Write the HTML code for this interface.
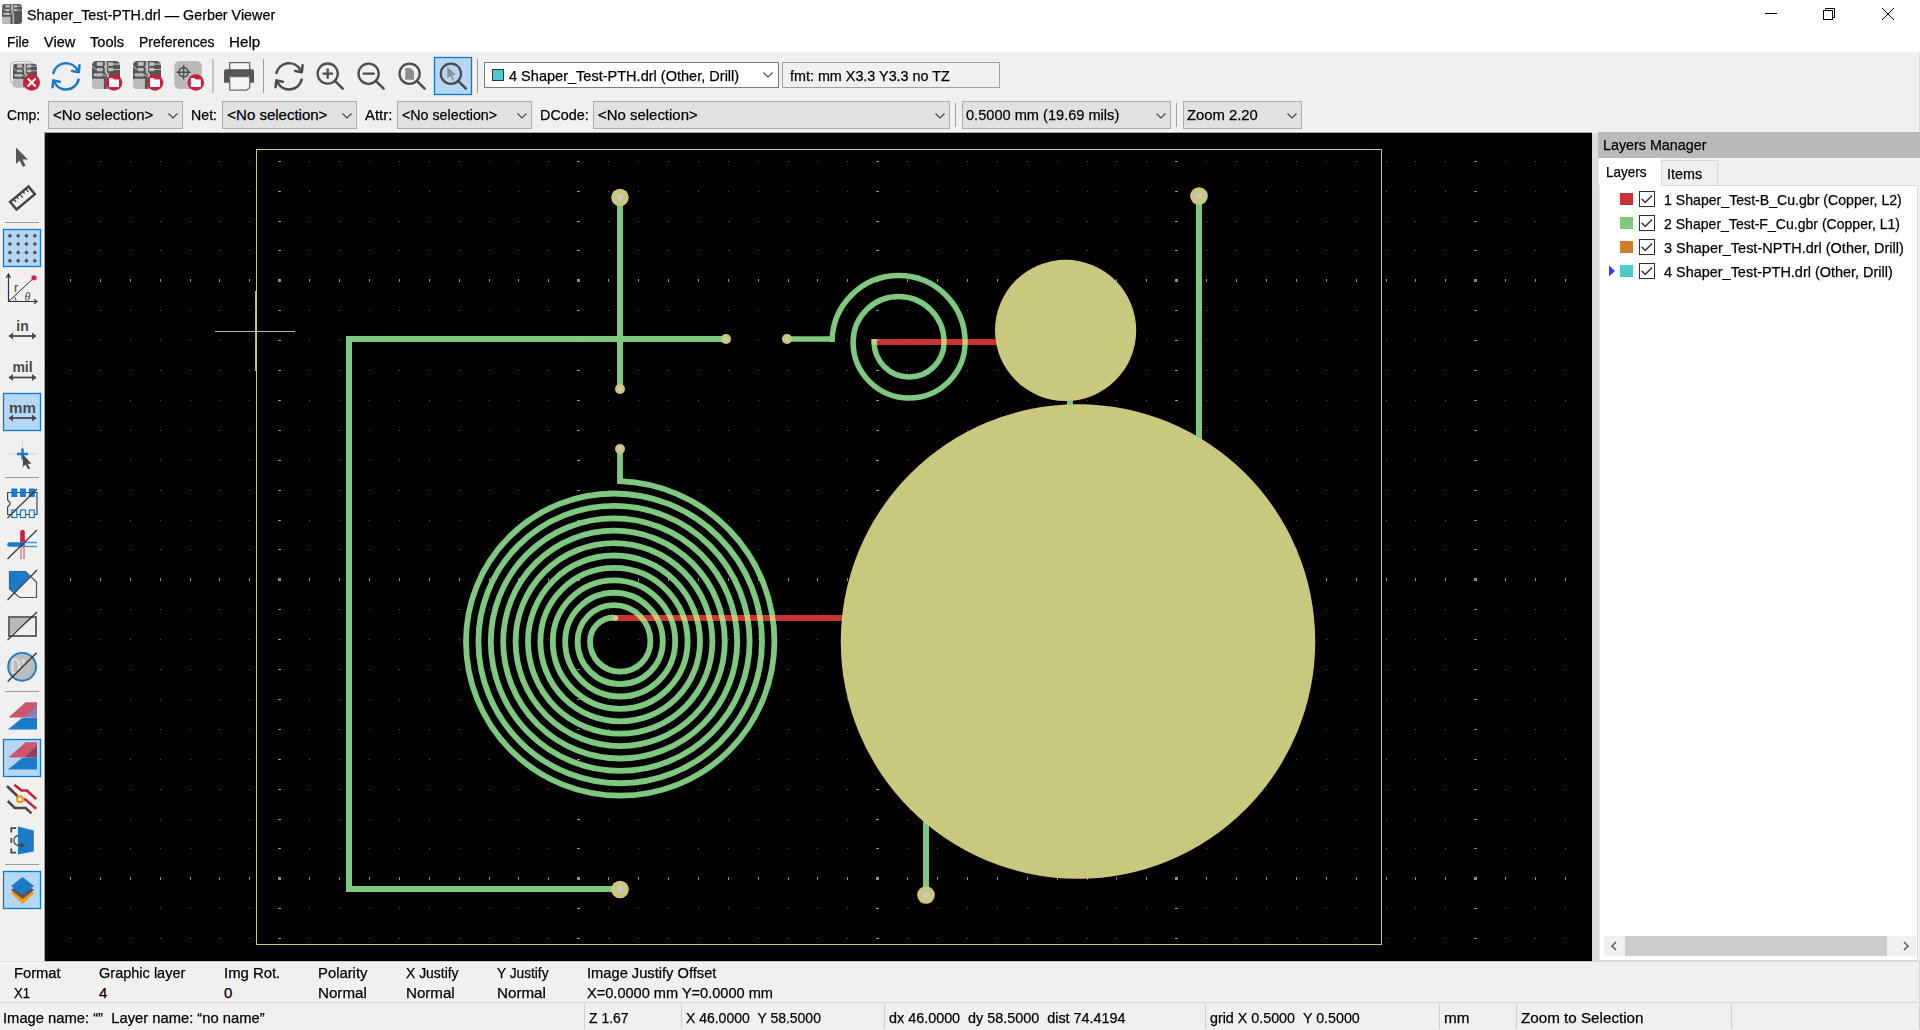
<!DOCTYPE html>
<html><head><meta charset="utf-8"><title>Gerber Viewer</title>
<style>
html,body{margin:0;padding:0;width:1920px;height:1030px;overflow:hidden;background:#f0f0f0;font-family:"Liberation Sans", sans-serif;}
.t{position:absolute;white-space:nowrap;line-height:1;font-family:"Liberation Sans", sans-serif;-webkit-text-stroke:0.25px currentColor;}
.r{position:absolute;}
</style></head><body>
<svg width="0" height="0" style="position:absolute"><symbol id="pcb" viewBox="0 0 28 28">
<rect width="28" height="28" rx="4.5" fill="#555"/>
<path d="M0 17.8H11.9V28H4.5Q0 28 0 23.5Z" fill="#bcbcbc"/>
<path d="M13.9 0V11.2L15.9 13.6V28" stroke="#b9b9b9" stroke-width="2.2" fill="none"/>
<circle cx="13.9" cy="5.8" r="1.9" fill="#b9b9b9"/>
<rect x="4.8" y="1" width="6" height="3.9" rx="0.8" fill="#bdbdbd"/>
<rect x="4.8" y="6.9" width="6" height="3.3" rx="0.8" fill="#bdbdbd"/>
<rect x="4.8" y="12.2" width="6" height="3.3" rx="0.8" fill="#bdbdbd"/>
<rect x="16.1" y="1.3" width="5.2" height="3.6" rx="0.8" fill="#bdbdbd"/>
<rect x="16.1" y="6.9" width="5.2" height="3.3" rx="0.8" fill="#bdbdbd"/>
<path d="M21 3.1H28M21 8.5H28M0 4.6Q2.5 8.5 4.8 8.5M10.8 13.8Q12.3 13.8 14 15.4" stroke="#b9b9b9" stroke-width="1.1" fill="none"/>
<path d="M0.9 13.8L2.8 12.2H4.8V15.5H2.8Z" fill="#bdbdbd"/>
</symbol></svg>
<div class="r" style="left:0px;top:0px;width:1920px;height:52px;background:#fff;"></div>
<svg class="r" style="left:2px;top:4px" width="20" height="20" viewBox="0 0 20 20"><use href="#pcb" width="20" height="20"/></svg>
<div class="t" style="left:27.30px;top:7.30px;font-size:15px;color:#000;transform:scaleX(0.9551);transform-origin:0 0;">Shaper_Test-PTH.drl — Gerber Viewer</div>
<svg class="r" style="left:1755px;top:0px" width="165" height="30" viewBox="1755 0 165 30"><path d="M1765 13.5H1777" stroke="#000" stroke-width="1"/><rect x="1823.5" y="10.5" width="9" height="9" fill="none" stroke="#000" stroke-width="1"/><path d="M1825.5 10.5V8.5H1834.5V17.5H1832.5" fill="none" stroke="#000" stroke-width="1"/><path d="M1882 8L1894 20M1894 8L1882 20" stroke="#000" stroke-width="1"/></svg>
<div class="t" style="left:7.30px;top:34.30px;font-size:15px;color:#000;transform:scaleX(0.9161);transform-origin:0 0;">File</div>
<div class="t" style="left:44.30px;top:34.30px;font-size:15px;color:#000;transform:scaleX(0.9674);transform-origin:0 0;">View</div>
<div class="t" style="left:90.40px;top:34.30px;font-size:15px;color:#000;transform:scaleX(0.9743);transform-origin:0 0;">Tools</div>
<div class="t" style="left:139.30px;top:34.30px;font-size:15px;color:#000;transform:scaleX(0.9335);transform-origin:0 0;">Preferences</div>
<div class="t" style="left:229.20px;top:34.30px;font-size:15px;color:#000;transform:scaleX(1.0105);transform-origin:0 0;">Help</div>
<div class="r" style="left:0px;top:52px;width:1920px;height:81px;background:#f0f0f0;"></div>
<svg class="r" style="left:0;top:52px" width="500" height="48" viewBox="0 52 500 48">
<rect x="10.5" y="61.5" width="23" height="23" rx="5" fill="none" stroke="#bdbdbd" stroke-width="1.2"/>
<use href="#pcb" x="13" y="63.5" width="24" height="24"/>
<circle cx="31.7" cy="82.5" r="8.3" fill="#c8213b"/><path d="M27.7 78.5L35.7 86.5M35.7 78.5L27.7 86.5" stroke="#fff" stroke-width="2.2"/>
<path d="M53.4 72.9A13 13 0 0 1 77.3 69.8" stroke="#1a7bc9" stroke-width="2.6" fill="none" stroke-linecap="round"/><path d="M78.6 79.7A13 13 0 0 1 54.7 82.8" stroke="#1a7bc9" stroke-width="2.6" fill="none" stroke-linecap="round"/><path d="M79.5 65.4L78.7 72.2L72.2 70.9" stroke="#1a7bc9" stroke-width="2.6" fill="none" stroke-linecap="round" stroke-linejoin="round"/><path d="M52.5 87.2L53.3 80.4L59.8 81.7" stroke="#1a7bc9" stroke-width="2.6" fill="none" stroke-linecap="round" stroke-linejoin="round"/>
<use href="#pcb" x="92" y="61" width="28" height="28"/>
<circle cx="114" cy="82.5" r="8.3" fill="#c8213b"/><path d="M109 78.0H112.5L114 79.5H119V87.0H109Z" fill="#fff"/>
<use href="#pcb" x="133" y="61" width="28" height="28"/>
<circle cx="155" cy="82.5" r="8.3" fill="#c8213b"/><path d="M150 78.0H153.5L155 79.5H160V87.0H150Z" fill="#fff"/>
<rect x="174.3" y="61" width="27.5" height="28" rx="5" fill="#bababa"/>
<circle cx="183.6" cy="72.2" r="4.6" stroke="#4d4d4d" stroke-width="1.6" fill="none"/>
<path d="M176.5 72.2H190.7M183.6 65V79.5" stroke="#4d4d4d" stroke-width="1.4"/>
<circle cx="195.8" cy="82.5" r="8.3" fill="#c8213b"/><path d="M190.8 78.0H194.3L195.8 79.5H200.8V87.0H190.8Z" fill="#fff"/>
<rect x="212.5" y="59" width="1" height="34" fill="#9a9a9a"/>
<rect x="229.7" y="62.6" width="20" height="8" fill="#f4f4f4" stroke="#6a6a6a" stroke-width="1.3"/>
<path d="M226 69.2H252Q254 69.2 254 71.2V82.8H224V71.2Q224 69.2 226 69.2Z" fill="#555"/>
<path d="M229.7 76.5H249.7V87.5L246.7 90.2H229.7Z" fill="#f4f4f4" stroke="#6a6a6a" stroke-width="1.3"/>
<rect x="263" y="59" width="1" height="34" fill="#9a9a9a"/>
<path d="M276.5 72.9A13 13 0 0 1 300.4 69.8" stroke="#4d4d4d" stroke-width="2.6" fill="none" stroke-linecap="round"/><path d="M301.7 79.7A13 13 0 0 1 277.8 82.8" stroke="#4d4d4d" stroke-width="2.6" fill="none" stroke-linecap="round"/><path d="M302.6 65.4L301.8 72.2L295.3 70.9" stroke="#4d4d4d" stroke-width="2.6" fill="none" stroke-linecap="round" stroke-linejoin="round"/><path d="M275.6 87.2L276.4 80.4L282.9 81.7" stroke="#4d4d4d" stroke-width="2.6" fill="none" stroke-linecap="round" stroke-linejoin="round"/>
<circle cx="327.7" cy="73.6" r="10.1" stroke="#4d4d4d" stroke-width="2.3" fill="none"/><path d="M334.9 80.8L342.7 88.6" stroke="#4d4d4d" stroke-width="2.6" stroke-linecap="round"/><path d="M322.5 73.6H333M327.7 68.4V78.8" stroke="#4d4d4d" stroke-width="2.3"/>
<circle cx="368.6" cy="73.7" r="10.1" stroke="#4d4d4d" stroke-width="2.3" fill="none"/><path d="M375.8 80.9L383.6 88.7" stroke="#4d4d4d" stroke-width="2.6" stroke-linecap="round"/><path d="M363.5 73.7H373.8" stroke="#4d4d4d" stroke-width="2.3" stroke-linecap="round"/>
<circle cx="409.6" cy="73.7" r="10.1" stroke="#4d4d4d" stroke-width="2.3" fill="none"/><path d="M416.8 80.9L424.6 88.7" stroke="#4d4d4d" stroke-width="2.6" stroke-linecap="round"/><path d="M405.3 68H410.5L414 71.3V79.8H405.3Z" fill="#8c8c8c"/>
<rect x="434.5" y="57.5" width="37" height="37" fill="#b6d7f3" stroke="#0a78d6" stroke-width="1.3"/>
<circle cx="450.9" cy="73.7" r="10.1" stroke="#4d4d4d" stroke-width="2.3" fill="none"/><path d="M458.09999999999997 80.9L465.9 88.7" stroke="#4d4d4d" stroke-width="2.6" stroke-linecap="round"/><path d="M447.3 67L456 74.7L452.3 75L454 80L452.6 80.6L450.7 75.7L447.3 78.3Z" fill="#8e8e8e"/>
<rect x="477" y="59" width="1" height="34" fill="#9a9a9a"/>
</svg>
<div class="r" style="left:484px;top:62px;width:295px;height:26px;background:#fff;box-sizing:border-box;border:1px solid #7a7a7a;"></div>
<div class="r" style="left:492px;top:69px;width:12px;height:12px;background:#4fcbcb;box-sizing:border-box;border:1px solid #333;"></div>
<div class="t" style="left:509.00px;top:68.30px;font-size:15px;color:#000;transform:scaleX(0.9688);transform-origin:0 0;">4 Shaper_Test-PTH.drl (Other, Drill)</div>
<svg class="r" style="left:763px;top:72px" width="10" height="6" viewBox="0 0 10 6"><path d="M0.5 0.5L5 5L9.5 0.5" stroke="#444" stroke-width="1.1" fill="none"/></svg>
<div class="r" style="left:782px;top:62px;width:218px;height:26px;background:#f0f0f0;box-sizing:border-box;border:1px solid #a0a0a0;"></div>
<div class="t" style="left:789.60px;top:68.30px;font-size:15px;color:#000;transform:scaleX(0.9569);transform-origin:0 0;">fmt: mm X3.3 Y3.3 no TZ</div>
<div class="t" style="left:6.50px;top:107.30px;font-size:15px;color:#000;transform:scaleX(0.9226);transform-origin:0 0;">Cmp:</div>
<div class="r" style="left:48px;top:101px;width:135px;height:28px;background:#e1e1e1;box-sizing:border-box;border:1px solid #adadad;"></div><div class="t" style="left:53.40px;top:107.30px;font-size:15px;color:#000;transform:scaleX(1.0020);transform-origin:0 0;">&lt;No selection&gt;</div><svg class="r" style="left:168px;top:112.5px" width="10" height="6" viewBox="0 0 10 6"><path d="M0.5 0.5L5 5L9.5 0.5" stroke="#444" stroke-width="1.1" fill="none"/></svg>
<div class="t" style="left:191.40px;top:107.30px;font-size:15px;color:#000;transform:scaleX(0.9455);transform-origin:0 0;">Net:</div>
<div class="r" style="left:222px;top:101px;width:135px;height:28px;background:#e1e1e1;box-sizing:border-box;border:1px solid #adadad;"></div><div class="t" style="left:227.30px;top:107.30px;font-size:15px;color:#000;transform:scaleX(1.0000);transform-origin:0 0;">&lt;No selection&gt;</div><svg class="r" style="left:342px;top:112.5px" width="10" height="6" viewBox="0 0 10 6"><path d="M0.5 0.5L5 5L9.5 0.5" stroke="#444" stroke-width="1.1" fill="none"/></svg>
<div class="t" style="left:365.40px;top:107.30px;font-size:15px;color:#000;transform:scaleX(0.9927);transform-origin:0 0;">Attr:</div>
<div class="r" style="left:397px;top:101px;width:135px;height:28px;background:#e1e1e1;box-sizing:border-box;border:1px solid #adadad;"></div><div class="t" style="left:402.40px;top:107.30px;font-size:15px;color:#000;transform:scaleX(0.9500);transform-origin:0 0;">&lt;No selection&gt;</div><svg class="r" style="left:517px;top:112.5px" width="10" height="6" viewBox="0 0 10 6"><path d="M0.5 0.5L5 5L9.5 0.5" stroke="#444" stroke-width="1.1" fill="none"/></svg>
<div class="t" style="left:540.10px;top:107.30px;font-size:15px;color:#000;transform:scaleX(0.9592);transform-origin:0 0;">DCode:</div>
<div class="r" style="left:593px;top:101px;width:357px;height:28px;background:#e1e1e1;box-sizing:border-box;border:1px solid #adadad;"></div><div class="t" style="left:598.40px;top:107.30px;font-size:15px;color:#000;transform:scaleX(0.9960);transform-origin:0 0;">&lt;No selection&gt;</div><svg class="r" style="left:935px;top:112.5px" width="10" height="6" viewBox="0 0 10 6"><path d="M0.5 0.5L5 5L9.5 0.5" stroke="#444" stroke-width="1.1" fill="none"/></svg>
<div class="r" style="left:955px;top:103px;width:1px;height:24px;background:#a0a0a0;"></div>
<div class="r" style="left:962px;top:101px;width:209px;height:28px;background:#e1e1e1;box-sizing:border-box;border:1px solid #adadad;"></div><div class="t" style="left:965.50px;top:107.30px;font-size:15px;color:#000;transform:scaleX(0.9727);transform-origin:0 0;">0.5000 mm (19.69 mils)</div><svg class="r" style="left:1156px;top:112.5px" width="10" height="6" viewBox="0 0 10 6"><path d="M0.5 0.5L5 5L9.5 0.5" stroke="#444" stroke-width="1.1" fill="none"/></svg>
<div class="r" style="left:1176px;top:103px;width:1px;height:24px;background:#a0a0a0;"></div>
<div class="r" style="left:1183px;top:101px;width:119px;height:28px;background:#e1e1e1;box-sizing:border-box;border:1px solid #adadad;"></div><div class="t" style="left:1187.10px;top:107.30px;font-size:15px;color:#000;transform:scaleX(0.9882);transform-origin:0 0;">Zoom 2.20</div><svg class="r" style="left:1287px;top:112.5px" width="10" height="6" viewBox="0 0 10 6"><path d="M0.5 0.5L5 5L9.5 0.5" stroke="#444" stroke-width="1.1" fill="none"/></svg>
<div class="r" style="left:0px;top:133px;width:44px;height:828px;background:#f0f0f0;"></div>
<svg class="r" style="left:0;top:133px" width="44" height="828" viewBox="0 133 44 828">
<path d="M16 147.5V164L19.6 160.6L23 167L25.6 165.6L22.5 159.5H28Z" fill="#555"/>
<g transform="rotate(-40 22.5 198)"><rect x="10.5" y="193" width="24" height="10" fill="none" stroke="#444" stroke-width="2.4"/><path d="M15 193V197M19 193V196M23 193V198M27 193V196M31 193V197" stroke="#444" stroke-width="1.3"/></g>
<rect x="5" y="222" width="34" height="1" fill="#9a9a9a"/>
<rect x="3.5" y="229.5" width="37" height="37" fill="#b6d7f3" stroke="#0a78d6" stroke-width="1.3"/>
<rect x="8.3" y="234.2" width="3.2" height="3.2" transform="rotate(45 9.9 235.8)" fill="#555"/><rect x="8.3" y="242.5" width="3.2" height="3.2" transform="rotate(45 9.9 244.1)" fill="#555"/><rect x="8.3" y="250.8" width="3.2" height="3.2" transform="rotate(45 9.9 252.4)" fill="#555"/><rect x="8.3" y="259.1" width="3.2" height="3.2" transform="rotate(45 9.9 260.7)" fill="#555"/><rect x="16.6" y="234.2" width="3.2" height="3.2" transform="rotate(45 18.2 235.8)" fill="#555"/><rect x="16.6" y="242.5" width="3.2" height="3.2" transform="rotate(45 18.2 244.1)" fill="#555"/><rect x="16.6" y="250.8" width="3.2" height="3.2" transform="rotate(45 18.2 252.4)" fill="#555"/><rect x="16.6" y="259.1" width="3.2" height="3.2" transform="rotate(45 18.2 260.7)" fill="#555"/><rect x="24.9" y="234.2" width="3.2" height="3.2" transform="rotate(45 26.5 235.8)" fill="#555"/><rect x="24.9" y="242.5" width="3.2" height="3.2" transform="rotate(45 26.5 244.1)" fill="#555"/><rect x="24.9" y="250.8" width="3.2" height="3.2" transform="rotate(45 26.5 252.4)" fill="#555"/><rect x="24.9" y="259.1" width="3.2" height="3.2" transform="rotate(45 26.5 260.7)" fill="#555"/><rect x="33.2" y="234.2" width="3.2" height="3.2" transform="rotate(45 34.8 235.8)" fill="#555"/><rect x="33.2" y="242.5" width="3.2" height="3.2" transform="rotate(45 34.8 244.1)" fill="#555"/><rect x="33.2" y="250.8" width="3.2" height="3.2" transform="rotate(45 34.8 252.4)" fill="#555"/><rect x="33.2" y="259.1" width="3.2" height="3.2" transform="rotate(45 34.8 260.7)" fill="#555"/>
<path d="M8.5 275V301.5H36" stroke="#333" stroke-width="1.2" fill="none"/>
<path d="M6.3 278L8.5 274L10.7 278M34 299.3L37 301.5L34 303.7" stroke="#333" stroke-width="1.1" fill="none"/>
<path d="M8.5 301.5L33.8 278" stroke="#333" stroke-width="1"/>
<path d="M16 301.5A8 8 0 0 0 14.5 296.5" stroke="#333" stroke-width="0.9" fill="none"/>
<circle cx="34" cy="277.8" r="2.6" fill="#d12a48"/>
<text x="14" y="292" font-family="Liberation Sans" font-size="13" fill="#444">r</text>
<text x="24.5" y="301" font-family="Liberation Serif" font-style="italic" font-size="12" fill="#444">θ</text>
<text x="22.5" y="331" text-anchor="middle" font-family="Liberation Sans" font-weight="bold" font-size="14" fill="#4a4a4a">in</text>
<path d="M9 336H36" stroke="#4a4a4a" stroke-width="1.8"/><path d="M13 332.5L8.6 336L13 339.5ZM32 332.5L36.4 336L32 339.5Z" fill="#4a4a4a"/>
<text x="22.5" y="372" text-anchor="middle" font-family="Liberation Sans" font-weight="bold" font-size="14" fill="#4a4a4a">mil</text>
<path d="M9 377.5H36" stroke="#4a4a4a" stroke-width="1.8"/><path d="M13 374L8.6 377.5L13 381ZM32 374L36.4 377.5L32 381Z" fill="#4a4a4a"/>
<rect x="3.5" y="393.5" width="37" height="37" fill="#b6d7f3" stroke="#0a78d6" stroke-width="1.3"/>
<text x="22.5" y="413" text-anchor="middle" font-family="Liberation Sans" font-weight="bold" font-size="14" fill="#4a4a4a" textLength="27" lengthAdjust="spacingAndGlyphs">mm</text>
<path d="M9 418H36" stroke="#4a4a4a" stroke-width="1.8"/><path d="M13 414.5L8.6 418L13 421.5ZM32 414.5L36.4 418L32 421.5Z" fill="#4a4a4a"/>
<path d="M7 454H37M22.5 440V468" stroke="#d8d8d8" stroke-width="1"/>
<path d="M17 454H28M22.5 448.5V459.5" stroke="#1a7bc9" stroke-width="2.6"/>
<path d="M23 454.5V467L25.6 464.5L28 469.3L30 468.3L27.7 463.7H31.5Z" fill="#4a4a4a"/>
<rect x="5" y="477" width="34" height="1" fill="#9a9a9a"/>
<path d="M7.6 492.5H37V514.5H7.6V507L10 504.5L10 502.5L7.6 500Z" fill="none" stroke="#444" stroke-width="1.2"/>
<rect x="11.3" y="488.5" width="6" height="8.5" fill="#1a7bc9"/><rect x="20" y="488.5" width="6" height="8.5" fill="#1a7bc9"/><rect x="28.8" y="488.5" width="6" height="8.5" fill="#1a7bc9"/>
<rect x="11.8" y="510" width="5" height="7.5" fill="#f0f0f0" stroke="#1a7bc9" stroke-width="1.2"/><rect x="20.5" y="510" width="5" height="7.5" fill="#f0f0f0" stroke="#1a7bc9" stroke-width="1.2"/><rect x="29.3" y="510" width="5" height="7.5" fill="#f0f0f0" stroke="#1a7bc9" stroke-width="1.2"/>
<path d="M7.5 518L37 489" stroke="#3c3c3c" stroke-width="1.3"/>
<path d="M22.5 532V545" stroke="#c8213b" stroke-width="4.6" stroke-linecap="round"/>
<path d="M21 545V559M24 545V559" stroke="#d45c73" stroke-width="1.2"/>
<path d="M9.5 544.5H22" stroke="#1a7bc9" stroke-width="4.6" stroke-linecap="round"/>
<path d="M22 542.5H37M22 546.5H37" stroke="#4a8fd0" stroke-width="1.5"/>
<path d="M7.5 559L37 530" stroke="#3c3c3c" stroke-width="1.3"/>
<path d="M9.5 571.5H25.5L36.5 582V597.5H19.5L9.5 589Z" fill="#f0f0f0" stroke="#555" stroke-width="1.2"/>
<path d="M9.5 571.5H25.5L30 576L14.5 592.5L9.5 589Z" fill="#1a7bc9"/>
<path d="M7.5 600L37 570" stroke="#3c3c3c" stroke-width="1.3"/>
<rect x="9" y="617" width="27" height="19" fill="#f0f0f0" stroke="#666" stroke-width="2"/>
<path d="M10 635V618H33Z" fill="#b8b8b8"/>
<path d="M7.5 640L37 612" stroke="#3c3c3c" stroke-width="1.3"/>
<circle cx="22.1" cy="666.8" r="13.9" fill="#bcbcbc" stroke="#1a7bc9" stroke-width="1.9"/>
<path d="M12.6 659.4H15.3Q19 659.4 19 666.2Q19 672.9 15.3 672.9H12.6Z" fill="none" stroke="#e6e6e6" stroke-width="1.6"/>
<path d="M20.8 662.2L23.8 659.6V666.5" fill="none" stroke="#e0e0e0" stroke-width="1.5"/>
<path d="M7.7 681.6L36.7 652.8" stroke="#333" stroke-width="1.4"/>
<rect x="5" y="691" width="34" height="1" fill="#9a9a9a"/>
<path d="M8.5 717.5L25.5 702.3H37V717.5Z" fill="#c9566d"/><path d="M25 717.5L37 705V717.5Z" fill="#8a7fae"/><path d="M7.9 729.6L22 718H37V729.6Z" fill="#1a7bc9"/>
<rect x="3.5" y="739.5" width="37" height="37" fill="#b6d7f3" stroke="#0a78d6" stroke-width="1.3"/>
<path d="M8.5 757.5L25.5 742.3H37V757.5Z" fill="#c9566d"/><path d="M25 757.5L37 745V757.5Z" fill="#8e3d62"/><path d="M7.9 769.6L22 758H37V769.6Z" fill="#1a7bc9"/>
<path d="M7 786L17.5 796.3" stroke="#4a4a4a" stroke-width="2.6"/>
<path d="M14.4 784.7L21.4 790.5H26.9L36.2 799" stroke="#c8213b" stroke-width="2.5" fill="none"/>
<path d="M23.7 799.4H25.3L36.2 808.7" stroke="#c8213b" stroke-width="2.5" fill="none"/>
<path d="M7.8 801L14.8 808H25.7L31.5 813.4" stroke="#4a4a4a" stroke-width="2.6" fill="none"/>
<circle cx="20" cy="799.3" r="2.9" fill="#fff" stroke="#f39c12" stroke-width="2.2"/>
<path d="M16 828.2H11.3V832.5M11.3 838V843M11.3 848.5V852.6H16" stroke="#4a4a4a" stroke-width="1.8" fill="none"/>
<path d="M17.9 826.6L33.8 830.5V851.5L17.9 854.6Z" fill="#1a7bc9"/>
<path d="M17.9 835.5A4.9 5 0 0 0 19.9 845.5H22" stroke="#4a4a4a" stroke-width="1.3" fill="none"/>
<path d="M20.8 842.6L25.6 845.3L20.8 848Z" fill="#4a4a4a"/>
<rect x="5" y="864" width="34" height="1" fill="#9a9a9a"/>
<rect x="3.5" y="871.5" width="37" height="37" fill="#b6d7f3" stroke="#0a78d6" stroke-width="1.3"/>
<path d="M22.5 895L34 887L22.5 879V883L22.5 895Z" fill="none"/>
<path d="M11 893L22.5 885L34 893L22.5 904Z" fill="#f39c12"/>
<path d="M11 890L22.5 882L34 890L22.5 899Z" fill="#555"/>
<path d="M11 886L22.5 877L34 886L22.5 895Z" fill="#1a7bc9"/>
</svg>
<div class="r" style="left:43px;top:131px;width:1550px;height:1px;background:#f8f8f8;"></div>
<div class="r" style="left:43px;top:131px;width:1px;height:830px;background:#f8f8f8;"></div>
<div class="r" style="left:44px;top:132px;width:1548px;height:1px;background:#a0a0a0;"></div>
<div class="r" style="left:44px;top:132px;width:1px;height:829px;background:#a0a0a0;"></div>
<div class="r" style="left:1592px;top:133px;width:328px;height:828px;background:#f0f0f0;"></div>
<div class="r" style="left:1592px;top:133px;width:7px;height:828px;background:#dcdcdc;"></div>
<div class="r" style="left:1598px;top:132px;width:322px;height:26px;background:#bababa;"></div>
<div class="t" style="left:1602.50px;top:137.30px;font-size:15px;color:#000;transform:scaleX(0.9541);transform-origin:0 0;">Layers Manager</div>
<div class="r" style="left:1599px;top:158px;width:62px;height:30px;background:#ffffff;"></div>
<div class="r" style="left:1661px;top:160px;width:57px;height:26px;background:#f0f0f0;box-sizing:border-box;border:1px solid #d9d9d9;border-bottom:none;"></div>
<div class="t" style="left:1606.40px;top:163.90px;font-size:15px;color:#000;transform:scaleX(0.9022);transform-origin:0 0;">Layers</div>
<div class="t" style="left:1666.70px;top:165.60px;font-size:15px;color:#000;transform:scaleX(0.9584);transform-origin:0 0;">Items</div>
<div class="r" style="left:1599px;top:185px;width:319px;height:776px;background:#ffffff;box-sizing:border-box;border:1px solid #d9d9d9;border-left-color:#e8e8e8;"></div>
<div class="r" style="left:1600px;top:185px;width:61px;height:3px;background:#ffffff;"></div>
<div class="r" style="left:1620px;top:193.0px;width:13px;height:12px;background:#c83434;"></div>
<div class="r" style="left:1639px;top:191.0px;width:16px;height:16px;background:#fff;box-sizing:border-box;border:1px solid #333;"></div>
<svg class="r" style="left:1639px;top:191.0px" width="16" height="16" viewBox="0 0 16 16"><path d="M2.6 7.8L6.3 11.5L13 4.6" stroke="#333" stroke-width="1.5" fill="none"/></svg>
<div class="t" style="left:1663.60px;top:192.10px;font-size:15px;color:#000;transform:scaleX(0.9413);transform-origin:0 0;">1 Shaper_Test-B_Cu.gbr (Copper, L2)</div>
<div class="r" style="left:1620px;top:217.0px;width:13px;height:12px;background:#7fc87f;"></div>
<div class="r" style="left:1639px;top:215.0px;width:16px;height:16px;background:#fff;box-sizing:border-box;border:1px solid #333;"></div>
<svg class="r" style="left:1639px;top:215.0px" width="16" height="16" viewBox="0 0 16 16"><path d="M2.6 7.8L6.3 11.5L13 4.6" stroke="#333" stroke-width="1.5" fill="none"/></svg>
<div class="t" style="left:1663.60px;top:216.10px;font-size:15px;color:#000;transform:scaleX(0.9374);transform-origin:0 0;">2 Shaper_Test-F_Cu.gbr (Copper, L1)</div>
<div class="r" style="left:1620px;top:241.0px;width:13px;height:12px;background:#ce7d2c;"></div>
<div class="r" style="left:1639px;top:239.0px;width:16px;height:16px;background:#fff;box-sizing:border-box;border:1px solid #333;"></div>
<svg class="r" style="left:1639px;top:239.0px" width="16" height="16" viewBox="0 0 16 16"><path d="M2.6 7.8L6.3 11.5L13 4.6" stroke="#333" stroke-width="1.5" fill="none"/></svg>
<div class="t" style="left:1663.60px;top:240.10px;font-size:15px;color:#000;transform:scaleX(0.9655);transform-origin:0 0;">3 Shaper_Test-NPTH.drl (Other, Drill)</div>
<div class="r" style="left:1620px;top:265.0px;width:13px;height:12px;background:#4fcbcb;"></div>
<div class="r" style="left:1639px;top:263.0px;width:16px;height:16px;background:#fff;box-sizing:border-box;border:1px solid #333;"></div>
<svg class="r" style="left:1639px;top:263.0px" width="16" height="16" viewBox="0 0 16 16"><path d="M2.6 7.8L6.3 11.5L13 4.6" stroke="#333" stroke-width="1.5" fill="none"/></svg>
<div class="t" style="left:1663.60px;top:264.10px;font-size:15px;color:#000;transform:scaleX(0.9629);transform-origin:0 0;">4 Shaper_Test-PTH.drl (Other, Drill)</div>
<svg class="r" style="left:1608px;top:265px" width="8" height="12" viewBox="0 0 8 12"><path d="M1 0.5L7 6L1 11.5Z" fill="#3c3cf0"/></svg>
<div class="r" style="left:1604px;top:936px;width:312px;height:20px;background:#f0f0f0;"></div>
<div class="r" style="left:1625px;top:936px;width:262px;height:20px;background:#cdcdcd;"></div>
<svg class="r" style="left:1604px;top:936px" width="312" height="20" viewBox="1604 936 312 20"><path d="M1616 942L1612 946L1616 950M1904 942L1908 946L1904 950" stroke="#606060" stroke-width="1.6" fill="none"/></svg>
<div class="r" style="left:0px;top:961px;width:1920px;height:69px;background:#f0f0f0;"></div>
<div class="r" style="left:0px;top:961px;width:1920px;height:1px;background:#dcdcdc;"></div>
<div class="r" style="left:44px;top:961px;width:1549px;height:1px;background:#c4c4c4;"></div>
<div class="r" style="left:0px;top:962px;width:1920px;height:1px;background:#f5f5f5;"></div>
<div class="t" style="left:14.20px;top:964.90px;font-size:15px;color:#000;transform:scaleX(0.9811);transform-origin:0 0;">Format</div>
<div class="t" style="left:14.20px;top:985.10px;font-size:15px;color:#000;transform:scaleX(0.8707);transform-origin:0 0;">X1</div>
<div class="t" style="left:99.00px;top:964.90px;font-size:15px;color:#000;transform:scaleX(0.9681);transform-origin:0 0;">Graphic layer</div>
<div class="t" style="left:99.00px;top:985.10px;font-size:15px;color:#000;">4</div>
<div class="t" style="left:224.00px;top:964.90px;font-size:15px;color:#000;transform:scaleX(0.9925);transform-origin:0 0;">Img Rot.</div>
<div class="t" style="left:224.00px;top:985.10px;font-size:15px;color:#000;">0</div>
<div class="t" style="left:318.30px;top:964.90px;font-size:15px;color:#000;transform:scaleX(0.9880);transform-origin:0 0;">Polarity</div>
<div class="t" style="left:318.30px;top:985.10px;font-size:15px;color:#000;transform:scaleX(1.0088);transform-origin:0 0;">Normal</div>
<div class="t" style="left:406.25px;top:964.90px;font-size:15px;color:#000;transform:scaleX(0.9272);transform-origin:0 0;">X Justify</div>
<div class="t" style="left:406.25px;top:985.10px;font-size:15px;color:#000;transform:scaleX(1.0078);transform-origin:0 0;">Normal</div>
<div class="t" style="left:497.30px;top:964.90px;font-size:15px;color:#000;transform:scaleX(0.9126);transform-origin:0 0;">Y Justify</div>
<div class="t" style="left:497.30px;top:985.10px;font-size:15px;color:#000;transform:scaleX(1.0119);transform-origin:0 0;">Normal</div>
<div class="t" style="left:587.30px;top:964.90px;font-size:15px;color:#000;transform:scaleX(0.9784);transform-origin:0 0;">Image Justify Offset</div>
<div class="t" style="left:587.30px;top:985.10px;font-size:15px;color:#000;transform:scaleX(0.9713);transform-origin:0 0;">X=0.0000 mm Y=0.0000 mm</div>
<div class="r" style="left:0px;top:1002px;width:1920px;height:1px;background:#d7d7d7;"></div>
<div class="r" style="left:1919px;top:54px;width:1px;height:78px;background:#dadada;"></div>
<div class="r" style="left:1919px;top:962px;width:1px;height:40px;background:#d8d8d8;"></div>
<div class="r" style="left:584px;top:1004px;width:1px;height:25px;background:#d0d0d0;"></div>
<div class="r" style="left:681px;top:1004px;width:1px;height:25px;background:#d0d0d0;"></div>
<div class="r" style="left:884px;top:1004px;width:1px;height:25px;background:#d0d0d0;"></div>
<div class="r" style="left:1205px;top:1004px;width:1px;height:25px;background:#d0d0d0;"></div>
<div class="r" style="left:1439px;top:1004px;width:1px;height:25px;background:#d0d0d0;"></div>
<div class="r" style="left:1516px;top:1004px;width:1px;height:25px;background:#d0d0d0;"></div>
<div class="r" style="left:1731px;top:1004px;width:1px;height:25px;background:#d0d0d0;"></div>
<div class="r" style="left:1919px;top:1004px;width:1px;height:25px;background:#d0d0d0;"></div>
<div class="t" style="left:3.00px;top:1010.10px;font-size:15px;color:#000;transform:scaleX(0.9835);transform-origin:0 0;">Image name: “”&nbsp;&nbsp;Layer name: “no name”</div>
<div class="t" style="left:588.60px;top:1010.10px;font-size:15px;color:#000;transform:scaleX(0.9294);transform-origin:0 0;">Z 1.67</div>
<div class="t" style="left:685.90px;top:1010.10px;font-size:15px;color:#000;transform:scaleX(0.9314);transform-origin:0 0;">X 46.0000&nbsp;&nbsp;Y 58.5000</div>
<div class="t" style="left:889.40px;top:1010.10px;font-size:15px;color:#000;transform:scaleX(0.9580);transform-origin:0 0;">dx 46.0000&nbsp;&nbsp;dy 58.5000&nbsp;&nbsp;dist 74.4194</div>
<div class="t" style="left:1210.20px;top:1010.10px;font-size:15px;color:#000;transform:scaleX(0.9521);transform-origin:0 0;">grid X 0.5000&nbsp;&nbsp;Y 0.5000</div>
<div class="t" style="left:1444.40px;top:1010.10px;font-size:15px;color:#000;transform:scaleX(1.0160);transform-origin:0 0;">mm</div>
<div class="t" style="left:1520.80px;top:1010.10px;font-size:15px;color:#000;transform:scaleX(1.0134);transform-origin:0 0;">Zoom to Selection</div>
<svg id="cv" width="1547" height="828" viewBox="45 133 1547 828" style="position:absolute;left:45px;top:133px;background:#000;isolation:isolate">
<path d="M70 161h1v1h-1zM70 191h1v1h-1zM70 221h1v1h-1zM70 250h1v1h-1zM70 310h1v1h-1zM70 340h1v1h-1zM70 370h1v1h-1zM70 400h1v1h-1zM70 430h1v1h-1zM70 460h1v1h-1zM70 490h1v1h-1zM70 520h1v1h-1zM70 549h1v1h-1zM70 609h1v1h-1zM70 639h1v1h-1zM70 669h1v1h-1zM70 699h1v1h-1zM70 729h1v1h-1zM70 759h1v1h-1zM70 789h1v1h-1zM70 819h1v1h-1zM70 848h1v1h-1zM70 908h1v1h-1zM70 938h1v1h-1zM100 161h1v1h-1zM100 191h1v1h-1zM100 221h1v1h-1zM100 250h1v1h-1zM100 310h1v1h-1zM100 340h1v1h-1zM100 370h1v1h-1zM100 400h1v1h-1zM100 430h1v1h-1zM100 460h1v1h-1zM100 490h1v1h-1zM100 520h1v1h-1zM100 549h1v1h-1zM100 609h1v1h-1zM100 639h1v1h-1zM100 669h1v1h-1zM100 699h1v1h-1zM100 729h1v1h-1zM100 759h1v1h-1zM100 789h1v1h-1zM100 819h1v1h-1zM100 848h1v1h-1zM100 908h1v1h-1zM100 938h1v1h-1zM130 161h1v1h-1zM130 191h1v1h-1zM130 221h1v1h-1zM130 250h1v1h-1zM130 310h1v1h-1zM130 340h1v1h-1zM130 370h1v1h-1zM130 400h1v1h-1zM130 430h1v1h-1zM130 460h1v1h-1zM130 490h1v1h-1zM130 520h1v1h-1zM130 549h1v1h-1zM130 609h1v1h-1zM130 639h1v1h-1zM130 669h1v1h-1zM130 699h1v1h-1zM130 729h1v1h-1zM130 759h1v1h-1zM130 789h1v1h-1zM130 819h1v1h-1zM130 848h1v1h-1zM130 908h1v1h-1zM130 938h1v1h-1zM160 161h1v1h-1zM160 191h1v1h-1zM160 221h1v1h-1zM160 250h1v1h-1zM160 310h1v1h-1zM160 340h1v1h-1zM160 370h1v1h-1zM160 400h1v1h-1zM160 430h1v1h-1zM160 460h1v1h-1zM160 490h1v1h-1zM160 520h1v1h-1zM160 549h1v1h-1zM160 609h1v1h-1zM160 639h1v1h-1zM160 669h1v1h-1zM160 699h1v1h-1zM160 729h1v1h-1zM160 759h1v1h-1zM160 789h1v1h-1zM160 819h1v1h-1zM160 848h1v1h-1zM160 908h1v1h-1zM160 938h1v1h-1zM190 161h1v1h-1zM190 191h1v1h-1zM190 221h1v1h-1zM190 250h1v1h-1zM190 310h1v1h-1zM190 340h1v1h-1zM190 370h1v1h-1zM190 400h1v1h-1zM190 430h1v1h-1zM190 460h1v1h-1zM190 490h1v1h-1zM190 520h1v1h-1zM190 549h1v1h-1zM190 609h1v1h-1zM190 639h1v1h-1zM190 669h1v1h-1zM190 699h1v1h-1zM190 729h1v1h-1zM190 759h1v1h-1zM190 789h1v1h-1zM190 819h1v1h-1zM190 848h1v1h-1zM190 908h1v1h-1zM190 938h1v1h-1zM219 161h1v1h-1zM219 191h1v1h-1zM219 221h1v1h-1zM219 250h1v1h-1zM219 310h1v1h-1zM219 340h1v1h-1zM219 370h1v1h-1zM219 400h1v1h-1zM219 430h1v1h-1zM219 460h1v1h-1zM219 490h1v1h-1zM219 520h1v1h-1zM219 549h1v1h-1zM219 609h1v1h-1zM219 639h1v1h-1zM219 669h1v1h-1zM219 699h1v1h-1zM219 729h1v1h-1zM219 759h1v1h-1zM219 789h1v1h-1zM219 819h1v1h-1zM219 848h1v1h-1zM219 908h1v1h-1zM219 938h1v1h-1zM249 161h1v1h-1zM249 191h1v1h-1zM249 221h1v1h-1zM249 250h1v1h-1zM249 310h1v1h-1zM249 340h1v1h-1zM249 370h1v1h-1zM249 400h1v1h-1zM249 430h1v1h-1zM249 460h1v1h-1zM249 490h1v1h-1zM249 520h1v1h-1zM249 549h1v1h-1zM249 609h1v1h-1zM249 639h1v1h-1zM249 669h1v1h-1zM249 699h1v1h-1zM249 729h1v1h-1zM249 759h1v1h-1zM249 789h1v1h-1zM249 819h1v1h-1zM249 848h1v1h-1zM249 908h1v1h-1zM249 938h1v1h-1zM309 161h1v1h-1zM309 191h1v1h-1zM309 221h1v1h-1zM309 250h1v1h-1zM309 310h1v1h-1zM309 340h1v1h-1zM309 370h1v1h-1zM309 400h1v1h-1zM309 430h1v1h-1zM309 460h1v1h-1zM309 490h1v1h-1zM309 520h1v1h-1zM309 549h1v1h-1zM309 609h1v1h-1zM309 639h1v1h-1zM309 669h1v1h-1zM309 699h1v1h-1zM309 729h1v1h-1zM309 759h1v1h-1zM309 789h1v1h-1zM309 819h1v1h-1zM309 848h1v1h-1zM309 908h1v1h-1zM309 938h1v1h-1zM339 161h1v1h-1zM339 191h1v1h-1zM339 221h1v1h-1zM339 250h1v1h-1zM339 310h1v1h-1zM339 340h1v1h-1zM339 370h1v1h-1zM339 400h1v1h-1zM339 430h1v1h-1zM339 460h1v1h-1zM339 490h1v1h-1zM339 520h1v1h-1zM339 549h1v1h-1zM339 609h1v1h-1zM339 639h1v1h-1zM339 669h1v1h-1zM339 699h1v1h-1zM339 729h1v1h-1zM339 759h1v1h-1zM339 789h1v1h-1zM339 819h1v1h-1zM339 848h1v1h-1zM339 908h1v1h-1zM339 938h1v1h-1zM369 161h1v1h-1zM369 191h1v1h-1zM369 221h1v1h-1zM369 250h1v1h-1zM369 310h1v1h-1zM369 340h1v1h-1zM369 370h1v1h-1zM369 400h1v1h-1zM369 430h1v1h-1zM369 460h1v1h-1zM369 490h1v1h-1zM369 520h1v1h-1zM369 549h1v1h-1zM369 609h1v1h-1zM369 639h1v1h-1zM369 669h1v1h-1zM369 699h1v1h-1zM369 729h1v1h-1zM369 759h1v1h-1zM369 789h1v1h-1zM369 819h1v1h-1zM369 848h1v1h-1zM369 908h1v1h-1zM369 938h1v1h-1zM399 161h1v1h-1zM399 191h1v1h-1zM399 221h1v1h-1zM399 250h1v1h-1zM399 310h1v1h-1zM399 340h1v1h-1zM399 370h1v1h-1zM399 400h1v1h-1zM399 430h1v1h-1zM399 460h1v1h-1zM399 490h1v1h-1zM399 520h1v1h-1zM399 549h1v1h-1zM399 609h1v1h-1zM399 639h1v1h-1zM399 669h1v1h-1zM399 699h1v1h-1zM399 729h1v1h-1zM399 759h1v1h-1zM399 789h1v1h-1zM399 819h1v1h-1zM399 848h1v1h-1zM399 908h1v1h-1zM399 938h1v1h-1zM429 161h1v1h-1zM429 191h1v1h-1zM429 221h1v1h-1zM429 250h1v1h-1zM429 310h1v1h-1zM429 340h1v1h-1zM429 370h1v1h-1zM429 400h1v1h-1zM429 430h1v1h-1zM429 460h1v1h-1zM429 490h1v1h-1zM429 520h1v1h-1zM429 549h1v1h-1zM429 609h1v1h-1zM429 639h1v1h-1zM429 669h1v1h-1zM429 699h1v1h-1zM429 729h1v1h-1zM429 759h1v1h-1zM429 789h1v1h-1zM429 819h1v1h-1zM429 848h1v1h-1zM429 908h1v1h-1zM429 938h1v1h-1zM459 161h1v1h-1zM459 191h1v1h-1zM459 221h1v1h-1zM459 250h1v1h-1zM459 310h1v1h-1zM459 340h1v1h-1zM459 370h1v1h-1zM459 400h1v1h-1zM459 430h1v1h-1zM459 460h1v1h-1zM459 490h1v1h-1zM459 520h1v1h-1zM459 549h1v1h-1zM459 609h1v1h-1zM459 639h1v1h-1zM459 669h1v1h-1zM459 699h1v1h-1zM459 729h1v1h-1zM459 759h1v1h-1zM459 789h1v1h-1zM459 819h1v1h-1zM459 848h1v1h-1zM459 908h1v1h-1zM459 938h1v1h-1zM489 161h1v1h-1zM489 191h1v1h-1zM489 221h1v1h-1zM489 250h1v1h-1zM489 310h1v1h-1zM489 340h1v1h-1zM489 370h1v1h-1zM489 400h1v1h-1zM489 430h1v1h-1zM489 460h1v1h-1zM489 490h1v1h-1zM489 520h1v1h-1zM489 549h1v1h-1zM489 609h1v1h-1zM489 639h1v1h-1zM489 669h1v1h-1zM489 699h1v1h-1zM489 729h1v1h-1zM489 759h1v1h-1zM489 789h1v1h-1zM489 819h1v1h-1zM489 848h1v1h-1zM489 908h1v1h-1zM489 938h1v1h-1zM518 161h1v1h-1zM518 191h1v1h-1zM518 221h1v1h-1zM518 250h1v1h-1zM518 310h1v1h-1zM518 340h1v1h-1zM518 370h1v1h-1zM518 400h1v1h-1zM518 430h1v1h-1zM518 460h1v1h-1zM518 490h1v1h-1zM518 520h1v1h-1zM518 549h1v1h-1zM518 609h1v1h-1zM518 639h1v1h-1zM518 669h1v1h-1zM518 699h1v1h-1zM518 729h1v1h-1zM518 759h1v1h-1zM518 789h1v1h-1zM518 819h1v1h-1zM518 848h1v1h-1zM518 908h1v1h-1zM518 938h1v1h-1zM548 161h1v1h-1zM548 191h1v1h-1zM548 221h1v1h-1zM548 250h1v1h-1zM548 310h1v1h-1zM548 340h1v1h-1zM548 370h1v1h-1zM548 400h1v1h-1zM548 430h1v1h-1zM548 460h1v1h-1zM548 490h1v1h-1zM548 520h1v1h-1zM548 549h1v1h-1zM548 609h1v1h-1zM548 639h1v1h-1zM548 669h1v1h-1zM548 699h1v1h-1zM548 729h1v1h-1zM548 759h1v1h-1zM548 789h1v1h-1zM548 819h1v1h-1zM548 848h1v1h-1zM548 908h1v1h-1zM548 938h1v1h-1zM608 161h1v1h-1zM608 191h1v1h-1zM608 221h1v1h-1zM608 250h1v1h-1zM608 310h1v1h-1zM608 340h1v1h-1zM608 370h1v1h-1zM608 400h1v1h-1zM608 430h1v1h-1zM608 460h1v1h-1zM608 490h1v1h-1zM608 520h1v1h-1zM608 549h1v1h-1zM608 609h1v1h-1zM608 639h1v1h-1zM608 669h1v1h-1zM608 699h1v1h-1zM608 729h1v1h-1zM608 759h1v1h-1zM608 789h1v1h-1zM608 819h1v1h-1zM608 848h1v1h-1zM608 908h1v1h-1zM608 938h1v1h-1zM638 161h1v1h-1zM638 191h1v1h-1zM638 221h1v1h-1zM638 250h1v1h-1zM638 310h1v1h-1zM638 340h1v1h-1zM638 370h1v1h-1zM638 400h1v1h-1zM638 430h1v1h-1zM638 460h1v1h-1zM638 490h1v1h-1zM638 520h1v1h-1zM638 549h1v1h-1zM638 609h1v1h-1zM638 639h1v1h-1zM638 669h1v1h-1zM638 699h1v1h-1zM638 729h1v1h-1zM638 759h1v1h-1zM638 789h1v1h-1zM638 819h1v1h-1zM638 848h1v1h-1zM638 908h1v1h-1zM638 938h1v1h-1zM668 161h1v1h-1zM668 191h1v1h-1zM668 221h1v1h-1zM668 250h1v1h-1zM668 310h1v1h-1zM668 340h1v1h-1zM668 370h1v1h-1zM668 400h1v1h-1zM668 430h1v1h-1zM668 460h1v1h-1zM668 490h1v1h-1zM668 520h1v1h-1zM668 549h1v1h-1zM668 609h1v1h-1zM668 639h1v1h-1zM668 669h1v1h-1zM668 699h1v1h-1zM668 729h1v1h-1zM668 759h1v1h-1zM668 789h1v1h-1zM668 819h1v1h-1zM668 848h1v1h-1zM668 908h1v1h-1zM668 938h1v1h-1zM698 161h1v1h-1zM698 191h1v1h-1zM698 221h1v1h-1zM698 250h1v1h-1zM698 310h1v1h-1zM698 340h1v1h-1zM698 370h1v1h-1zM698 400h1v1h-1zM698 430h1v1h-1zM698 460h1v1h-1zM698 490h1v1h-1zM698 520h1v1h-1zM698 549h1v1h-1zM698 609h1v1h-1zM698 639h1v1h-1zM698 669h1v1h-1zM698 699h1v1h-1zM698 729h1v1h-1zM698 759h1v1h-1zM698 789h1v1h-1zM698 819h1v1h-1zM698 848h1v1h-1zM698 908h1v1h-1zM698 938h1v1h-1zM728 161h1v1h-1zM728 191h1v1h-1zM728 221h1v1h-1zM728 250h1v1h-1zM728 310h1v1h-1zM728 340h1v1h-1zM728 370h1v1h-1zM728 400h1v1h-1zM728 430h1v1h-1zM728 460h1v1h-1zM728 490h1v1h-1zM728 520h1v1h-1zM728 549h1v1h-1zM728 609h1v1h-1zM728 639h1v1h-1zM728 669h1v1h-1zM728 699h1v1h-1zM728 729h1v1h-1zM728 759h1v1h-1zM728 789h1v1h-1zM728 819h1v1h-1zM728 848h1v1h-1zM728 908h1v1h-1zM728 938h1v1h-1zM758 161h1v1h-1zM758 191h1v1h-1zM758 221h1v1h-1zM758 250h1v1h-1zM758 310h1v1h-1zM758 340h1v1h-1zM758 370h1v1h-1zM758 400h1v1h-1zM758 430h1v1h-1zM758 460h1v1h-1zM758 490h1v1h-1zM758 520h1v1h-1zM758 549h1v1h-1zM758 609h1v1h-1zM758 639h1v1h-1zM758 669h1v1h-1zM758 699h1v1h-1zM758 729h1v1h-1zM758 759h1v1h-1zM758 789h1v1h-1zM758 819h1v1h-1zM758 848h1v1h-1zM758 908h1v1h-1zM758 938h1v1h-1zM788 161h1v1h-1zM788 191h1v1h-1zM788 221h1v1h-1zM788 250h1v1h-1zM788 310h1v1h-1zM788 340h1v1h-1zM788 370h1v1h-1zM788 400h1v1h-1zM788 430h1v1h-1zM788 460h1v1h-1zM788 490h1v1h-1zM788 520h1v1h-1zM788 549h1v1h-1zM788 609h1v1h-1zM788 639h1v1h-1zM788 669h1v1h-1zM788 699h1v1h-1zM788 729h1v1h-1zM788 759h1v1h-1zM788 789h1v1h-1zM788 819h1v1h-1zM788 848h1v1h-1zM788 908h1v1h-1zM788 938h1v1h-1zM817 161h1v1h-1zM817 191h1v1h-1zM817 221h1v1h-1zM817 250h1v1h-1zM817 310h1v1h-1zM817 340h1v1h-1zM817 370h1v1h-1zM817 400h1v1h-1zM817 430h1v1h-1zM817 460h1v1h-1zM817 490h1v1h-1zM817 520h1v1h-1zM817 549h1v1h-1zM817 609h1v1h-1zM817 639h1v1h-1zM817 669h1v1h-1zM817 699h1v1h-1zM817 729h1v1h-1zM817 759h1v1h-1zM817 789h1v1h-1zM817 819h1v1h-1zM817 848h1v1h-1zM817 908h1v1h-1zM817 938h1v1h-1zM847 161h1v1h-1zM847 191h1v1h-1zM847 221h1v1h-1zM847 250h1v1h-1zM847 310h1v1h-1zM847 340h1v1h-1zM847 370h1v1h-1zM847 400h1v1h-1zM847 430h1v1h-1zM847 460h1v1h-1zM847 490h1v1h-1zM847 520h1v1h-1zM847 549h1v1h-1zM847 609h1v1h-1zM847 639h1v1h-1zM847 669h1v1h-1zM847 699h1v1h-1zM847 729h1v1h-1zM847 759h1v1h-1zM847 789h1v1h-1zM847 819h1v1h-1zM847 848h1v1h-1zM847 908h1v1h-1zM847 938h1v1h-1zM907 161h1v1h-1zM907 191h1v1h-1zM907 221h1v1h-1zM907 250h1v1h-1zM907 310h1v1h-1zM907 340h1v1h-1zM907 370h1v1h-1zM907 400h1v1h-1zM907 430h1v1h-1zM907 460h1v1h-1zM907 490h1v1h-1zM907 520h1v1h-1zM907 549h1v1h-1zM907 609h1v1h-1zM907 639h1v1h-1zM907 669h1v1h-1zM907 699h1v1h-1zM907 729h1v1h-1zM907 759h1v1h-1zM907 789h1v1h-1zM907 819h1v1h-1zM907 848h1v1h-1zM907 908h1v1h-1zM907 938h1v1h-1zM937 161h1v1h-1zM937 191h1v1h-1zM937 221h1v1h-1zM937 250h1v1h-1zM937 310h1v1h-1zM937 340h1v1h-1zM937 370h1v1h-1zM937 400h1v1h-1zM937 430h1v1h-1zM937 460h1v1h-1zM937 490h1v1h-1zM937 520h1v1h-1zM937 549h1v1h-1zM937 609h1v1h-1zM937 639h1v1h-1zM937 669h1v1h-1zM937 699h1v1h-1zM937 729h1v1h-1zM937 759h1v1h-1zM937 789h1v1h-1zM937 819h1v1h-1zM937 848h1v1h-1zM937 908h1v1h-1zM937 938h1v1h-1zM967 161h1v1h-1zM967 191h1v1h-1zM967 221h1v1h-1zM967 250h1v1h-1zM967 310h1v1h-1zM967 340h1v1h-1zM967 370h1v1h-1zM967 400h1v1h-1zM967 430h1v1h-1zM967 460h1v1h-1zM967 490h1v1h-1zM967 520h1v1h-1zM967 549h1v1h-1zM967 609h1v1h-1zM967 639h1v1h-1zM967 669h1v1h-1zM967 699h1v1h-1zM967 729h1v1h-1zM967 759h1v1h-1zM967 789h1v1h-1zM967 819h1v1h-1zM967 848h1v1h-1zM967 908h1v1h-1zM967 938h1v1h-1zM997 161h1v1h-1zM997 191h1v1h-1zM997 221h1v1h-1zM997 250h1v1h-1zM997 310h1v1h-1zM997 340h1v1h-1zM997 370h1v1h-1zM997 400h1v1h-1zM997 430h1v1h-1zM997 460h1v1h-1zM997 490h1v1h-1zM997 520h1v1h-1zM997 549h1v1h-1zM997 609h1v1h-1zM997 639h1v1h-1zM997 669h1v1h-1zM997 699h1v1h-1zM997 729h1v1h-1zM997 759h1v1h-1zM997 789h1v1h-1zM997 819h1v1h-1zM997 848h1v1h-1zM997 908h1v1h-1zM997 938h1v1h-1zM1027 161h1v1h-1zM1027 191h1v1h-1zM1027 221h1v1h-1zM1027 250h1v1h-1zM1027 310h1v1h-1zM1027 340h1v1h-1zM1027 370h1v1h-1zM1027 400h1v1h-1zM1027 430h1v1h-1zM1027 460h1v1h-1zM1027 490h1v1h-1zM1027 520h1v1h-1zM1027 549h1v1h-1zM1027 609h1v1h-1zM1027 639h1v1h-1zM1027 669h1v1h-1zM1027 699h1v1h-1zM1027 729h1v1h-1zM1027 759h1v1h-1zM1027 789h1v1h-1zM1027 819h1v1h-1zM1027 848h1v1h-1zM1027 908h1v1h-1zM1027 938h1v1h-1zM1057 161h1v1h-1zM1057 191h1v1h-1zM1057 221h1v1h-1zM1057 250h1v1h-1zM1057 310h1v1h-1zM1057 340h1v1h-1zM1057 370h1v1h-1zM1057 400h1v1h-1zM1057 430h1v1h-1zM1057 460h1v1h-1zM1057 490h1v1h-1zM1057 520h1v1h-1zM1057 549h1v1h-1zM1057 609h1v1h-1zM1057 639h1v1h-1zM1057 669h1v1h-1zM1057 699h1v1h-1zM1057 729h1v1h-1zM1057 759h1v1h-1zM1057 789h1v1h-1zM1057 819h1v1h-1zM1057 848h1v1h-1zM1057 908h1v1h-1zM1057 938h1v1h-1zM1087 161h1v1h-1zM1087 191h1v1h-1zM1087 221h1v1h-1zM1087 250h1v1h-1zM1087 310h1v1h-1zM1087 340h1v1h-1zM1087 370h1v1h-1zM1087 400h1v1h-1zM1087 430h1v1h-1zM1087 460h1v1h-1zM1087 490h1v1h-1zM1087 520h1v1h-1zM1087 549h1v1h-1zM1087 609h1v1h-1zM1087 639h1v1h-1zM1087 669h1v1h-1zM1087 699h1v1h-1zM1087 729h1v1h-1zM1087 759h1v1h-1zM1087 789h1v1h-1zM1087 819h1v1h-1zM1087 848h1v1h-1zM1087 908h1v1h-1zM1087 938h1v1h-1zM1116 161h1v1h-1zM1116 191h1v1h-1zM1116 221h1v1h-1zM1116 250h1v1h-1zM1116 310h1v1h-1zM1116 340h1v1h-1zM1116 370h1v1h-1zM1116 400h1v1h-1zM1116 430h1v1h-1zM1116 460h1v1h-1zM1116 490h1v1h-1zM1116 520h1v1h-1zM1116 549h1v1h-1zM1116 609h1v1h-1zM1116 639h1v1h-1zM1116 669h1v1h-1zM1116 699h1v1h-1zM1116 729h1v1h-1zM1116 759h1v1h-1zM1116 789h1v1h-1zM1116 819h1v1h-1zM1116 848h1v1h-1zM1116 908h1v1h-1zM1116 938h1v1h-1zM1146 161h1v1h-1zM1146 191h1v1h-1zM1146 221h1v1h-1zM1146 250h1v1h-1zM1146 310h1v1h-1zM1146 340h1v1h-1zM1146 370h1v1h-1zM1146 400h1v1h-1zM1146 430h1v1h-1zM1146 460h1v1h-1zM1146 490h1v1h-1zM1146 520h1v1h-1zM1146 549h1v1h-1zM1146 609h1v1h-1zM1146 639h1v1h-1zM1146 669h1v1h-1zM1146 699h1v1h-1zM1146 729h1v1h-1zM1146 759h1v1h-1zM1146 789h1v1h-1zM1146 819h1v1h-1zM1146 848h1v1h-1zM1146 908h1v1h-1zM1146 938h1v1h-1zM1206 161h1v1h-1zM1206 191h1v1h-1zM1206 221h1v1h-1zM1206 250h1v1h-1zM1206 310h1v1h-1zM1206 340h1v1h-1zM1206 370h1v1h-1zM1206 400h1v1h-1zM1206 430h1v1h-1zM1206 460h1v1h-1zM1206 490h1v1h-1zM1206 520h1v1h-1zM1206 549h1v1h-1zM1206 609h1v1h-1zM1206 639h1v1h-1zM1206 669h1v1h-1zM1206 699h1v1h-1zM1206 729h1v1h-1zM1206 759h1v1h-1zM1206 789h1v1h-1zM1206 819h1v1h-1zM1206 848h1v1h-1zM1206 908h1v1h-1zM1206 938h1v1h-1zM1236 161h1v1h-1zM1236 191h1v1h-1zM1236 221h1v1h-1zM1236 250h1v1h-1zM1236 310h1v1h-1zM1236 340h1v1h-1zM1236 370h1v1h-1zM1236 400h1v1h-1zM1236 430h1v1h-1zM1236 460h1v1h-1zM1236 490h1v1h-1zM1236 520h1v1h-1zM1236 549h1v1h-1zM1236 609h1v1h-1zM1236 639h1v1h-1zM1236 669h1v1h-1zM1236 699h1v1h-1zM1236 729h1v1h-1zM1236 759h1v1h-1zM1236 789h1v1h-1zM1236 819h1v1h-1zM1236 848h1v1h-1zM1236 908h1v1h-1zM1236 938h1v1h-1zM1266 161h1v1h-1zM1266 191h1v1h-1zM1266 221h1v1h-1zM1266 250h1v1h-1zM1266 310h1v1h-1zM1266 340h1v1h-1zM1266 370h1v1h-1zM1266 400h1v1h-1zM1266 430h1v1h-1zM1266 460h1v1h-1zM1266 490h1v1h-1zM1266 520h1v1h-1zM1266 549h1v1h-1zM1266 609h1v1h-1zM1266 639h1v1h-1zM1266 669h1v1h-1zM1266 699h1v1h-1zM1266 729h1v1h-1zM1266 759h1v1h-1zM1266 789h1v1h-1zM1266 819h1v1h-1zM1266 848h1v1h-1zM1266 908h1v1h-1zM1266 938h1v1h-1zM1296 161h1v1h-1zM1296 191h1v1h-1zM1296 221h1v1h-1zM1296 250h1v1h-1zM1296 310h1v1h-1zM1296 340h1v1h-1zM1296 370h1v1h-1zM1296 400h1v1h-1zM1296 430h1v1h-1zM1296 460h1v1h-1zM1296 490h1v1h-1zM1296 520h1v1h-1zM1296 549h1v1h-1zM1296 609h1v1h-1zM1296 639h1v1h-1zM1296 669h1v1h-1zM1296 699h1v1h-1zM1296 729h1v1h-1zM1296 759h1v1h-1zM1296 789h1v1h-1zM1296 819h1v1h-1zM1296 848h1v1h-1zM1296 908h1v1h-1zM1296 938h1v1h-1zM1326 161h1v1h-1zM1326 191h1v1h-1zM1326 221h1v1h-1zM1326 250h1v1h-1zM1326 310h1v1h-1zM1326 340h1v1h-1zM1326 370h1v1h-1zM1326 400h1v1h-1zM1326 430h1v1h-1zM1326 460h1v1h-1zM1326 490h1v1h-1zM1326 520h1v1h-1zM1326 549h1v1h-1zM1326 609h1v1h-1zM1326 639h1v1h-1zM1326 669h1v1h-1zM1326 699h1v1h-1zM1326 729h1v1h-1zM1326 759h1v1h-1zM1326 789h1v1h-1zM1326 819h1v1h-1zM1326 848h1v1h-1zM1326 908h1v1h-1zM1326 938h1v1h-1zM1356 161h1v1h-1zM1356 191h1v1h-1zM1356 221h1v1h-1zM1356 250h1v1h-1zM1356 310h1v1h-1zM1356 340h1v1h-1zM1356 370h1v1h-1zM1356 400h1v1h-1zM1356 430h1v1h-1zM1356 460h1v1h-1zM1356 490h1v1h-1zM1356 520h1v1h-1zM1356 549h1v1h-1zM1356 609h1v1h-1zM1356 639h1v1h-1zM1356 669h1v1h-1zM1356 699h1v1h-1zM1356 729h1v1h-1zM1356 759h1v1h-1zM1356 789h1v1h-1zM1356 819h1v1h-1zM1356 848h1v1h-1zM1356 908h1v1h-1zM1356 938h1v1h-1zM1386 161h1v1h-1zM1386 191h1v1h-1zM1386 221h1v1h-1zM1386 250h1v1h-1zM1386 310h1v1h-1zM1386 340h1v1h-1zM1386 370h1v1h-1zM1386 400h1v1h-1zM1386 430h1v1h-1zM1386 460h1v1h-1zM1386 490h1v1h-1zM1386 520h1v1h-1zM1386 549h1v1h-1zM1386 609h1v1h-1zM1386 639h1v1h-1zM1386 669h1v1h-1zM1386 699h1v1h-1zM1386 729h1v1h-1zM1386 759h1v1h-1zM1386 789h1v1h-1zM1386 819h1v1h-1zM1386 848h1v1h-1zM1386 908h1v1h-1zM1386 938h1v1h-1zM1415 161h1v1h-1zM1415 191h1v1h-1zM1415 221h1v1h-1zM1415 250h1v1h-1zM1415 310h1v1h-1zM1415 340h1v1h-1zM1415 370h1v1h-1zM1415 400h1v1h-1zM1415 430h1v1h-1zM1415 460h1v1h-1zM1415 490h1v1h-1zM1415 520h1v1h-1zM1415 549h1v1h-1zM1415 609h1v1h-1zM1415 639h1v1h-1zM1415 669h1v1h-1zM1415 699h1v1h-1zM1415 729h1v1h-1zM1415 759h1v1h-1zM1415 789h1v1h-1zM1415 819h1v1h-1zM1415 848h1v1h-1zM1415 908h1v1h-1zM1415 938h1v1h-1zM1445 161h1v1h-1zM1445 191h1v1h-1zM1445 221h1v1h-1zM1445 250h1v1h-1zM1445 310h1v1h-1zM1445 340h1v1h-1zM1445 370h1v1h-1zM1445 400h1v1h-1zM1445 430h1v1h-1zM1445 460h1v1h-1zM1445 490h1v1h-1zM1445 520h1v1h-1zM1445 549h1v1h-1zM1445 609h1v1h-1zM1445 639h1v1h-1zM1445 669h1v1h-1zM1445 699h1v1h-1zM1445 729h1v1h-1zM1445 759h1v1h-1zM1445 789h1v1h-1zM1445 819h1v1h-1zM1445 848h1v1h-1zM1445 908h1v1h-1zM1445 938h1v1h-1zM1505 161h1v1h-1zM1505 191h1v1h-1zM1505 221h1v1h-1zM1505 250h1v1h-1zM1505 310h1v1h-1zM1505 340h1v1h-1zM1505 370h1v1h-1zM1505 400h1v1h-1zM1505 430h1v1h-1zM1505 460h1v1h-1zM1505 490h1v1h-1zM1505 520h1v1h-1zM1505 549h1v1h-1zM1505 609h1v1h-1zM1505 639h1v1h-1zM1505 669h1v1h-1zM1505 699h1v1h-1zM1505 729h1v1h-1zM1505 759h1v1h-1zM1505 789h1v1h-1zM1505 819h1v1h-1zM1505 848h1v1h-1zM1505 908h1v1h-1zM1505 938h1v1h-1zM1535 161h1v1h-1zM1535 191h1v1h-1zM1535 221h1v1h-1zM1535 250h1v1h-1zM1535 310h1v1h-1zM1535 340h1v1h-1zM1535 370h1v1h-1zM1535 400h1v1h-1zM1535 430h1v1h-1zM1535 460h1v1h-1zM1535 490h1v1h-1zM1535 520h1v1h-1zM1535 549h1v1h-1zM1535 609h1v1h-1zM1535 639h1v1h-1zM1535 669h1v1h-1zM1535 699h1v1h-1zM1535 729h1v1h-1zM1535 759h1v1h-1zM1535 789h1v1h-1zM1535 819h1v1h-1zM1535 848h1v1h-1zM1535 908h1v1h-1zM1535 938h1v1h-1zM1565 161h1v1h-1zM1565 191h1v1h-1zM1565 221h1v1h-1zM1565 250h1v1h-1zM1565 310h1v1h-1zM1565 340h1v1h-1zM1565 370h1v1h-1zM1565 400h1v1h-1zM1565 430h1v1h-1zM1565 460h1v1h-1zM1565 490h1v1h-1zM1565 520h1v1h-1zM1565 549h1v1h-1zM1565 609h1v1h-1zM1565 639h1v1h-1zM1565 669h1v1h-1zM1565 699h1v1h-1zM1565 729h1v1h-1zM1565 759h1v1h-1zM1565 789h1v1h-1zM1565 819h1v1h-1zM1565 848h1v1h-1zM1565 908h1v1h-1zM1565 938h1v1h-1z" fill="#505050"/><path d="M70 279h1v3h-1zM70 578h1v3h-1zM70 877h1v3h-1zM100 279h1v3h-1zM100 578h1v3h-1zM100 877h1v3h-1zM130 279h1v3h-1zM130 578h1v3h-1zM130 877h1v3h-1zM160 279h1v3h-1zM160 578h1v3h-1zM160 877h1v3h-1zM190 279h1v3h-1zM190 578h1v3h-1zM190 877h1v3h-1zM219 279h1v3h-1zM219 578h1v3h-1zM219 877h1v3h-1zM249 279h1v3h-1zM249 578h1v3h-1zM249 877h1v3h-1zM278 161h3v1h-3zM278 191h3v1h-3zM278 221h3v1h-3zM278 250h3v1h-3zM278 279h3v3h-3zM278 310h3v1h-3zM278 340h3v1h-3zM278 370h3v1h-3zM278 400h3v1h-3zM278 430h3v1h-3zM278 460h3v1h-3zM278 490h3v1h-3zM278 520h3v1h-3zM278 549h3v1h-3zM278 578h3v3h-3zM278 609h3v1h-3zM278 639h3v1h-3zM278 669h3v1h-3zM278 699h3v1h-3zM278 729h3v1h-3zM278 759h3v1h-3zM278 789h3v1h-3zM278 819h3v1h-3zM278 848h3v1h-3zM278 877h3v3h-3zM278 908h3v1h-3zM278 938h3v1h-3zM309 279h1v3h-1zM309 578h1v3h-1zM309 877h1v3h-1zM339 279h1v3h-1zM339 578h1v3h-1zM339 877h1v3h-1zM369 279h1v3h-1zM369 578h1v3h-1zM369 877h1v3h-1zM399 279h1v3h-1zM399 578h1v3h-1zM399 877h1v3h-1zM429 279h1v3h-1zM429 578h1v3h-1zM429 877h1v3h-1zM459 279h1v3h-1zM459 578h1v3h-1zM459 877h1v3h-1zM489 279h1v3h-1zM489 578h1v3h-1zM489 877h1v3h-1zM518 279h1v3h-1zM518 578h1v3h-1zM518 877h1v3h-1zM548 279h1v3h-1zM548 578h1v3h-1zM548 877h1v3h-1zM577 161h3v1h-3zM577 191h3v1h-3zM577 221h3v1h-3zM577 250h3v1h-3zM577 279h3v3h-3zM577 310h3v1h-3zM577 340h3v1h-3zM577 370h3v1h-3zM577 400h3v1h-3zM577 430h3v1h-3zM577 460h3v1h-3zM577 490h3v1h-3zM577 520h3v1h-3zM577 549h3v1h-3zM577 578h3v3h-3zM577 609h3v1h-3zM577 639h3v1h-3zM577 669h3v1h-3zM577 699h3v1h-3zM577 729h3v1h-3zM577 759h3v1h-3zM577 789h3v1h-3zM577 819h3v1h-3zM577 848h3v1h-3zM577 877h3v3h-3zM577 908h3v1h-3zM577 938h3v1h-3zM608 279h1v3h-1zM608 578h1v3h-1zM608 877h1v3h-1zM638 279h1v3h-1zM638 578h1v3h-1zM638 877h1v3h-1zM668 279h1v3h-1zM668 578h1v3h-1zM668 877h1v3h-1zM698 279h1v3h-1zM698 578h1v3h-1zM698 877h1v3h-1zM728 279h1v3h-1zM728 578h1v3h-1zM728 877h1v3h-1zM758 279h1v3h-1zM758 578h1v3h-1zM758 877h1v3h-1zM788 279h1v3h-1zM788 578h1v3h-1zM788 877h1v3h-1zM817 279h1v3h-1zM817 578h1v3h-1zM817 877h1v3h-1zM847 279h1v3h-1zM847 578h1v3h-1zM847 877h1v3h-1zM876 161h3v1h-3zM876 191h3v1h-3zM876 221h3v1h-3zM876 250h3v1h-3zM876 279h3v3h-3zM876 310h3v1h-3zM876 340h3v1h-3zM876 370h3v1h-3zM876 400h3v1h-3zM876 430h3v1h-3zM876 460h3v1h-3zM876 490h3v1h-3zM876 520h3v1h-3zM876 549h3v1h-3zM876 578h3v3h-3zM876 609h3v1h-3zM876 639h3v1h-3zM876 669h3v1h-3zM876 699h3v1h-3zM876 729h3v1h-3zM876 759h3v1h-3zM876 789h3v1h-3zM876 819h3v1h-3zM876 848h3v1h-3zM876 877h3v3h-3zM876 908h3v1h-3zM876 938h3v1h-3zM907 279h1v3h-1zM907 578h1v3h-1zM907 877h1v3h-1zM937 279h1v3h-1zM937 578h1v3h-1zM937 877h1v3h-1zM967 279h1v3h-1zM967 578h1v3h-1zM967 877h1v3h-1zM997 279h1v3h-1zM997 578h1v3h-1zM997 877h1v3h-1zM1027 279h1v3h-1zM1027 578h1v3h-1zM1027 877h1v3h-1zM1057 279h1v3h-1zM1057 578h1v3h-1zM1057 877h1v3h-1zM1087 279h1v3h-1zM1087 578h1v3h-1zM1087 877h1v3h-1zM1116 279h1v3h-1zM1116 578h1v3h-1zM1116 877h1v3h-1zM1146 279h1v3h-1zM1146 578h1v3h-1zM1146 877h1v3h-1zM1175 161h3v1h-3zM1175 191h3v1h-3zM1175 221h3v1h-3zM1175 250h3v1h-3zM1175 279h3v3h-3zM1175 310h3v1h-3zM1175 340h3v1h-3zM1175 370h3v1h-3zM1175 400h3v1h-3zM1175 430h3v1h-3zM1175 460h3v1h-3zM1175 490h3v1h-3zM1175 520h3v1h-3zM1175 549h3v1h-3zM1175 578h3v3h-3zM1175 609h3v1h-3zM1175 639h3v1h-3zM1175 669h3v1h-3zM1175 699h3v1h-3zM1175 729h3v1h-3zM1175 759h3v1h-3zM1175 789h3v1h-3zM1175 819h3v1h-3zM1175 848h3v1h-3zM1175 877h3v3h-3zM1175 908h3v1h-3zM1175 938h3v1h-3zM1206 279h1v3h-1zM1206 578h1v3h-1zM1206 877h1v3h-1zM1236 279h1v3h-1zM1236 578h1v3h-1zM1236 877h1v3h-1zM1266 279h1v3h-1zM1266 578h1v3h-1zM1266 877h1v3h-1zM1296 279h1v3h-1zM1296 578h1v3h-1zM1296 877h1v3h-1zM1326 279h1v3h-1zM1326 578h1v3h-1zM1326 877h1v3h-1zM1356 279h1v3h-1zM1356 578h1v3h-1zM1356 877h1v3h-1zM1386 279h1v3h-1zM1386 578h1v3h-1zM1386 877h1v3h-1zM1415 279h1v3h-1zM1415 578h1v3h-1zM1415 877h1v3h-1zM1445 279h1v3h-1zM1445 578h1v3h-1zM1445 877h1v3h-1zM1474 161h3v1h-3zM1474 191h3v1h-3zM1474 221h3v1h-3zM1474 250h3v1h-3zM1474 279h3v3h-3zM1474 310h3v1h-3zM1474 340h3v1h-3zM1474 370h3v1h-3zM1474 400h3v1h-3zM1474 430h3v1h-3zM1474 460h3v1h-3zM1474 490h3v1h-3zM1474 520h3v1h-3zM1474 549h3v1h-3zM1474 578h3v3h-3zM1474 609h3v1h-3zM1474 639h3v1h-3zM1474 669h3v1h-3zM1474 699h3v1h-3zM1474 729h3v1h-3zM1474 759h3v1h-3zM1474 789h3v1h-3zM1474 819h3v1h-3zM1474 848h3v1h-3zM1474 877h3v3h-3zM1474 908h3v1h-3zM1474 938h3v1h-3zM1505 279h1v3h-1zM1505 578h1v3h-1zM1505 877h1v3h-1zM1535 279h1v3h-1zM1535 578h1v3h-1zM1535 877h1v3h-1zM1565 279h1v3h-1zM1565 578h1v3h-1zM1565 877h1v3h-1z" fill="#8c8c8c"/>
<path d="M215 331.5H295M255.5 291V371" stroke="#b4b4b4" stroke-width="1" fill="none"/>
<g style="mix-blend-mode:lighten"><rect x="256.5" y="149.5" width="1125" height="795" fill="none" stroke="#7fc87f" stroke-width="1"/><path d="M620 197V389" fill="none" stroke="#7fc87f" stroke-width="6" stroke-linejoin="miter" stroke-linecap="butt"/><path d="M726 339H349V889H620" fill="none" stroke="#7fc87f" stroke-width="6" stroke-linejoin="miter" stroke-linecap="butt"/><path d="M1199 196V650" fill="none" stroke="#7fc87f" stroke-width="6" stroke-linejoin="miter" stroke-linecap="butt"/><path d="M1070 330V641" fill="none" stroke="#7fc87f" stroke-width="6" stroke-linejoin="miter" stroke-linecap="butt"/><path d="M926 895V760" fill="none" stroke="#7fc87f" stroke-width="6" stroke-linejoin="miter" stroke-linecap="butt"/><path d="M787 339L832.10 339L832.10 342.0A66.5 66.5 0 0 1 965.10 342.0A56.0 56.0 0 0 1 853.10 342.0A45.5 45.5 0 0 1 944.10 342.0A35.0 35.0 0 0 1 874.10 342.0L874.10 339" fill="none" stroke="#7fc87f" stroke-width="5.5"/><path d="M620 449L620.0 481.21A160.40 160.40 0 0 1 774.40 641.5A154.20 154.20 0 0 1 466.00 641.5A148.00 148.00 0 0 1 762.00 641.5A141.80 141.80 0 0 1 478.40 641.5A135.60 135.60 0 0 1 749.60 641.5A129.40 129.40 0 0 1 490.80 641.5A123.20 123.20 0 0 1 737.20 641.5A117.00 117.00 0 0 1 503.20 641.5A110.80 110.80 0 0 1 724.80 641.5A104.60 104.60 0 0 1 515.60 641.5A98.40 98.40 0 0 1 712.40 641.5A92.20 92.20 0 0 1 528.00 641.5A86.00 86.00 0 0 1 700.00 641.5A79.80 79.80 0 0 1 540.40 641.5A73.60 73.60 0 0 1 687.60 641.5A67.40 67.40 0 0 1 552.80 641.5A61.20 61.20 0 0 1 675.20 641.5A55.00 55.00 0 0 1 565.20 641.5A48.80 48.80 0 0 1 662.80 641.5A42.60 42.60 0 0 1 577.60 641.5A36.40 36.40 0 0 1 650.40 641.5A30.20 30.20 0 0 1 590.00 641.5A24.00 24.00 0 0 1 614.00 617.50" fill="none" stroke="#7fc87f" stroke-width="5.8"/><circle cx="615.5" cy="618" r="3" fill="#7fc87f"/><circle cx="620" cy="197.5" r="8.7" fill="#7fc87f"/><circle cx="620" cy="389" r="5.0" fill="#7fc87f"/><circle cx="726" cy="339" r="5.0" fill="#7fc87f"/><circle cx="787" cy="339" r="5.0" fill="#7fc87f"/><circle cx="1199" cy="196" r="8.8" fill="#7fc87f"/><circle cx="620" cy="449" r="5.0" fill="#7fc87f"/><circle cx="620" cy="889.5" r="8.8" fill="#7fc87f"/><circle cx="926" cy="895" r="8.8" fill="#7fc87f"/><circle cx="1065.6" cy="330.4" r="70.6" fill="#7fc87f"/><circle cx="1078" cy="641.5" r="237.2" fill="#7fc87f"/></g>
<g style="mix-blend-mode:lighten"><rect x="256.5" y="149.5" width="1125" height="795" fill="none" stroke="#c83434" stroke-width="1"/><path d="M871 342H1000" fill="none" stroke="#c83434" stroke-width="6" stroke-linejoin="miter" stroke-linecap="butt"/><path d="M612.5 618H845" fill="none" stroke="#c83434" stroke-width="6" stroke-linejoin="miter" stroke-linecap="butt"/><circle cx="620" cy="197.5" r="8.7" fill="#c83434"/><circle cx="620" cy="389" r="5.0" fill="#c83434"/><circle cx="726" cy="339" r="5.0" fill="#c83434"/><circle cx="787" cy="339" r="5.0" fill="#c83434"/><circle cx="1199" cy="196" r="8.8" fill="#c83434"/><circle cx="620" cy="449" r="5.0" fill="#c83434"/><circle cx="620" cy="889.5" r="8.8" fill="#c83434"/><circle cx="926" cy="895" r="8.8" fill="#c83434"/><circle cx="1065.6" cy="330.4" r="70.6" fill="#c83434"/><circle cx="1078" cy="641.5" r="237.2" fill="#c83434"/></g>
<g style="mix-blend-mode:lighten"><circle cx="620" cy="197.5" r="3.0" fill="#4fcbcb"/><circle cx="620" cy="389" r="1.75" fill="#4fcbcb"/><circle cx="726" cy="339" r="1.75" fill="#4fcbcb"/><circle cx="787" cy="339" r="1.75" fill="#4fcbcb"/><circle cx="1199" cy="196" r="3.0" fill="#4fcbcb"/><circle cx="620" cy="449" r="1.75" fill="#4fcbcb"/><circle cx="620" cy="889.5" r="3.0" fill="#4fcbcb"/><circle cx="926" cy="895" r="3.0" fill="#4fcbcb"/><circle cx="874" cy="342" r="1.2" fill="#4fcbcb"/><circle cx="615.5" cy="618" r="1.2" fill="#4fcbcb"/></g>
</svg>
</body></html>
